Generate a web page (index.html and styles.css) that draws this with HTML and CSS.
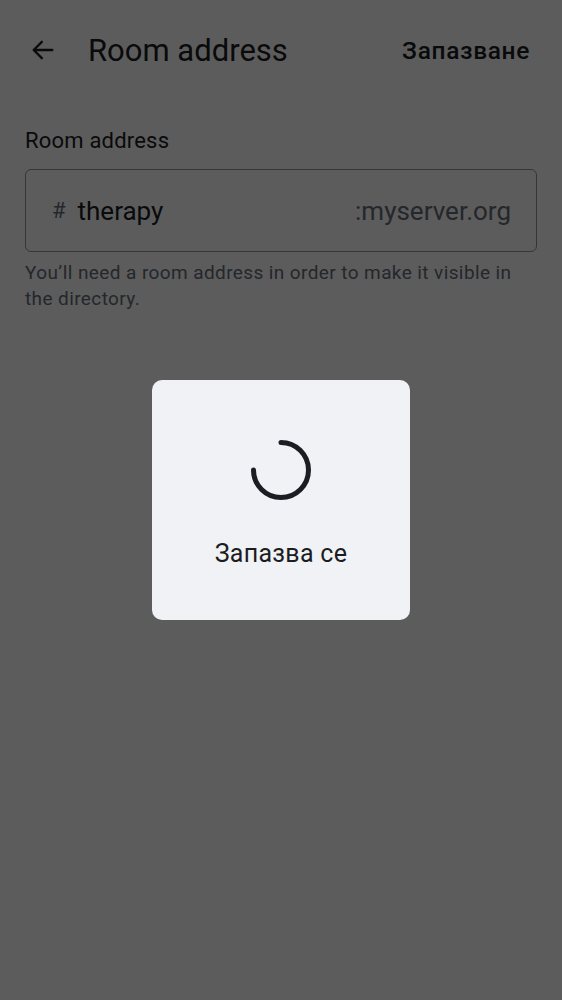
FILE: index.html
```html
<!DOCTYPE html>
<html lang="en">
<head>
<meta charset="utf-8">
<title>Room address</title>
<link rel="stylesheet" href="styles.css">
</head>
<body>
<div class="screen">
  <header class="topbar">
    <button class="back" aria-label="Back">
      <svg width="28" height="28" viewBox="0 0 24 24"><path d="M20 12H4.5M11 5l-7 7 7 7" fill="none" stroke="currentColor" stroke-width="2" stroke-linecap="round" stroke-linejoin="round"/></svg>
    </button>
    <h1 class="title">Room address</h1>
    <button class="save">Запазване</button>
  </header>
  <main class="content">
    <label class="field-label">Room address</label>
    <div class="field">
      <span class="hash">#</span>
      <span class="value">therapy</span>
      <span class="server">:myserver.org</span>
    </div>
    <p class="helper">You’ll need a room address in order to make it visible in the directory.</p>
  </main>
</div>
<div class="scrim">
  <div class="dialog" role="alertdialog">
    <svg class="spinner" width="66" height="66" viewBox="0 0 66 66"><path d="M33 5.5 A27.5 27.5 0 1 1 5.5 33" fill="none" stroke="#1b1d22" stroke-width="5" stroke-linecap="round"/></svg>
    <p class="dialog-text">Запазва се</p>
  </div>
</div>
</body>
</html>
```
FILE: styles.css
```css
* { box-sizing: border-box; }
html, body { margin: 0; padding: 0; }
body {
  width: 562px;
  height: 1000px;
  background: #ffffff;
  font-family: Roboto, "Noto Sans", sans-serif;
  color: #1b1d22;
  overflow: hidden;
}
.screen { height: 1000px; }
.topbar {
  display: flex;
  align-items: center;
  height: 100px;
  padding: 0 32px 0 29px;
}
.back {
  border: 0;
  background: none;
  padding: 0;
  width: 28px;
  height: 28px;
  color: #1b1d22;
  display: flex;
}
.title {
  margin: 0 0 0 31px;
  font-size: 31px;
  font-weight: 400;
  flex: 1;
}
.save {
  border: 0;
  background: none;
  padding: 0;
  font-family: inherit;
  font-size: 24.5px;
  font-weight: 500;
  letter-spacing: 0.65px;
  color: #1b1d22;
}
.content { padding: 25px 25px 0; }
.field-label {
  display: block;
  font-size: 22px;
  line-height: 32px;
  letter-spacing: 0.2px;
  color: #1b1d22;
}
.field {
  margin-top: 12px;
  height: 83px;
  border: 1px solid #8d97a5;
  border-radius: 6px;
  display: flex;
  align-items: center;
  padding: 0 25px 0 26px;
  font-size: 26px;
}
.hash { color: #656d77; font-size: 22px; margin-right: 12px; }
.value { flex: 1; color: #1b1d22; }
.server { color: #656d77; }
.helper {
  margin: 8px 0 0;
  font-size: 19px;
  line-height: 26px;
  color: #656d77;
  letter-spacing: 0.4px;
}
.scrim {
  position: fixed;
  inset: 0;
  background: rgba(0, 0, 0, 0.64);
  display: flex;
  align-items: center;
  justify-content: center;
}
.dialog {
  width: 258px;
  height: 240px;
  background: #f0f2f5;
  border-radius: 10px;
  display: flex;
  flex-direction: column;
  align-items: center;
  padding-top: 57px;
}
.spinner { display: block; }
.dialog-text {
  margin: 36px 0 0;
  font-size: 25px;
  color: #1b1d22;
  letter-spacing: 0.3px;
}
```
